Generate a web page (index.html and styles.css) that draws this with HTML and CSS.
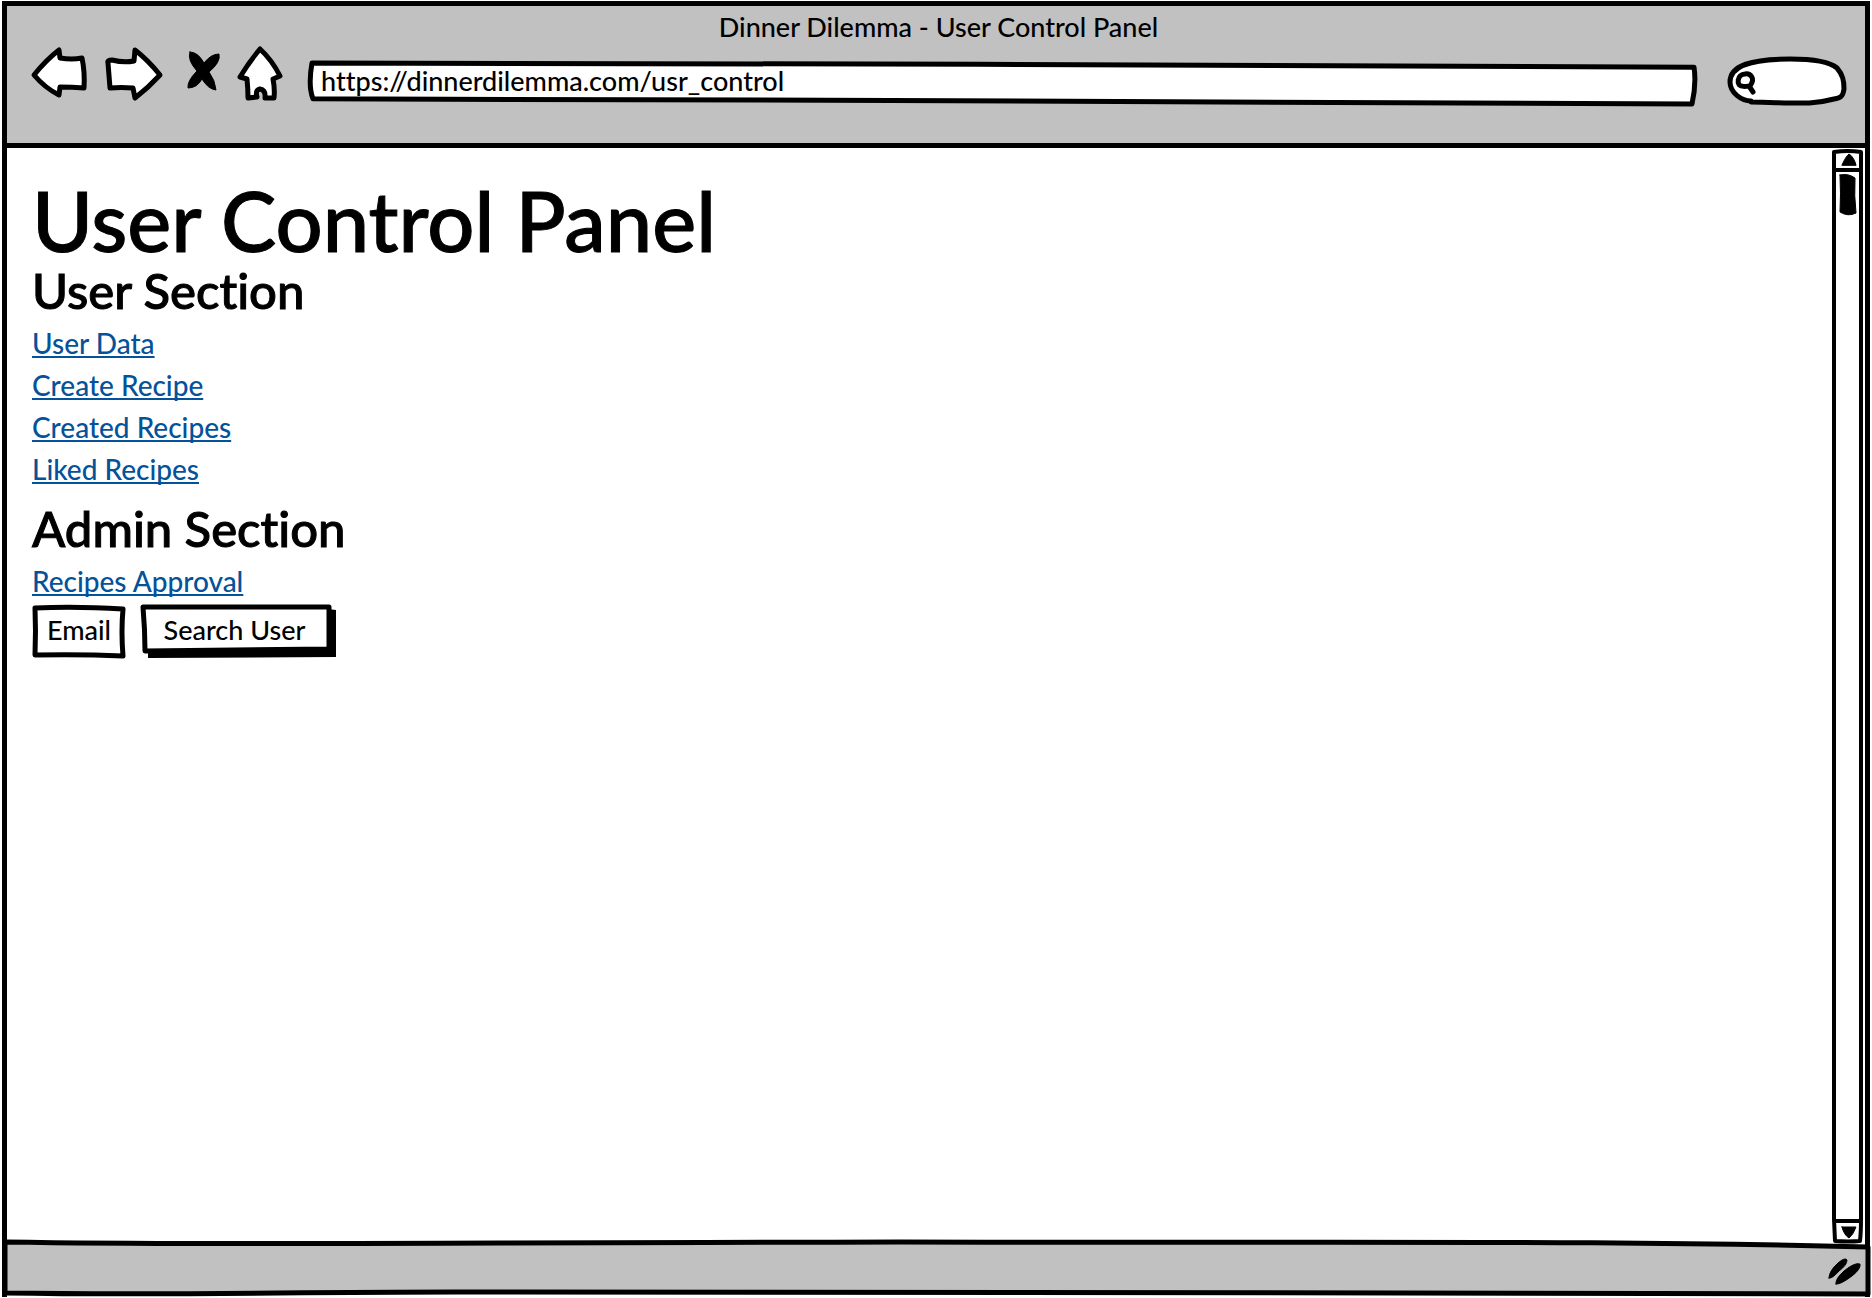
FILE: index.html
```html
<!DOCTYPE html>
<html lang="en">
<head>
<meta charset="utf-8">
<title>Dinner Dilemma - User Control Panel</title>
<link rel="stylesheet" href="styles.css">
</head>
<body>
<div class="window">
  <header class="chrome">
    <div class="window-title">Dinner Dilemma - User Control Panel</div>
    <div class="toolbar">
      <nav class="nav-buttons" aria-label="Browser">
        <button class="nav-button" type="button" aria-label="Back">
          <svg width="56" height="60" viewBox="31 46 56 60"><path d="M34 75Q46 60 59 50L60 58Q72 60 82 58Q85 72 84 88Q72 87 60 87L59 95Q45 88 34 75Z"/></svg>
        </button>
        <button class="nav-button" type="button" aria-label="Forward">
          <svg width="60" height="60" viewBox="104 46 60 60"><path d="M108 63Q107 60 112 60Q124 63 134 61L135 50Q148 60 160 75Q148 88 135 98L133 88Q121 87 110 88Q109 75 108 63Z"/></svg>
        </button>
        <button class="nav-button" type="button" aria-label="Stop">
          <svg class="solid" width="40" height="60" viewBox="181 46 40 60"><path d="M190 52Q198 52 204 63Q211 54 219 54Q221 62 209 72Q215 80 216 90Q208 89 202 79Q197 88 188 88Q187 81 197 71Q187 60 190 52Z"/></svg>
        </button>
        <button class="nav-button" type="button" aria-label="Home">
          <svg width="46" height="60" viewBox="238 46 46 60"><path d="M260 49Q272 60 280 76L273 79Q275 89 274 98L265 98Q266 90 260 89Q255 90 257 97L248 98Q248 89 247 79L240 77Q249 62 260 49Z"/></svg>
        </button>
      </nav>
      <div class="address">
        <svg class="sketch" viewBox="308 61 1389 44" preserveAspectRatio="none"><path d="M312 63C800 64 1200 64 1694 67C1696 80 1695 90 1692 103C1100 102 800 98 313 98C309 88 310 74 312 63Z"/></svg>
        <input class="address-input" type="text" aria-label="Address" value="https://dinnerdilemma.com/usr_control">
      </div>
      <div class="search">
        <svg class="sketch" viewBox="1727 57 119 50" preserveAspectRatio="none"><path d="M1751 102C1742 102 1730 94 1730 83C1730 66 1752 60 1790 60C1812 60 1830 63 1837 69C1843 76 1844 82 1844 90C1843 98 1840 99 1834 100C1812 106 1800 104 1751 103"/></svg>
        <svg class="glass" width="20" height="23" viewBox="1736 72 20 23"><path d="M1750 88C1756 80 1750 75 1745 76C1737 76 1736 88 1742 88C1745 89 1748 88 1749 88L1753 94"/></svg>
        <input class="search-input" type="text" aria-label="Search">
      </div>
    </div>
  </header>

  <div class="viewport">
    <main class="content">
      <h1>User Control Panel</h1>
      <h2>User Section</h2>
      <ul class="links">
        <li><a href="#data">User Data</a></li>
        <li><a href="#create">Create Recipe</a></li>
        <li><a href="#created">Created Recipes</a></li>
        <li><a href="#liked">Liked Recipes</a></li>
      </ul>
      <h2>Admin Section</h2>
      <ul class="links admin-links">
        <li><a href="#approval">Recipes Approval</a></li>
      </ul>
      <form class="user-search">
        <div class="email">
          <svg class="sketch" viewBox="32 604 94 53" preserveAspectRatio="none"><path d="M35 607Q75 605 123 608Q121 630 123 655Q80 653 35 654Q36 630 35 607Z"/></svg>
          <input class="email-input" type="text" aria-label="Email" value="Email">
        </div>
        <button class="search-button" type="submit">
          <svg class="sketch" viewBox="141 605 195 53" preserveAspectRatio="none"><path class="shadow" d="M328 609L336 610L336 657L148 658L148 652Z"/><path d="M144 607Q240 607 329 607L329 649Q250 650 145 651Q145 630 143 607Z"/></svg>
          <span class="button-label">Search User</span>
        </button>
      </form>
    </main>
    <div class="scrollbar">
      <button class="scroll-button" type="button" aria-label="Scroll up">
        <svg class="solid" width="31" height="23" viewBox="1832 149 31 23"><path d="M1842 165Q1846 156 1849 154Q1854 157 1856 165Z"/><path class="line" d="M1834 172L1834 152Q1848 150 1861 152L1861 172M1834 170L1861 170"/></svg>
      </button>
      <div class="track">
        <svg class="solid" width="16" height="42" viewBox="1840 174 16 42"><path d="M1840 175Q1848 173 1855 178Q1854 196 1856 213Q1848 217 1840 212Q1841 194 1840 175Z"/></svg>
      </div>
      <button class="scroll-button" type="button" aria-label="Scroll down">
        <svg class="solid" width="31" height="23" viewBox="1832 1220 31 23"><path d="M1842 1227L1856 1227Q1853 1235 1849 1238Q1844 1235 1842 1227Z"/><path class="line" d="M1834 1219L1835 1241Q1848 1242 1860 1241Q1861 1232 1861 1219M1834 1221L1861 1221"/></svg>
      </button>
    </div>
  </div>

  <footer class="status">
    <svg class="sketch" viewBox="7 1243 1858 54" preserveAspectRatio="none"><path d="M5 1242C200 1245 350 1243 900 1242C1400 1243 1600 1240 1868 1247L1868 1294C1400 1292 900 1294 500 1292C300 1291 200 1296 5 1293Z"/></svg>
    <svg class="grip solid" width="32" height="28" viewBox="1828 1257 32 28"><path d="M1829 1279Q1829 1272 1838 1264Q1845 1258 1847 1261Q1847 1266 1839 1272Q1832 1280 1829 1279ZM1836 1285Q1835 1280 1844 1272Q1855 1263 1860 1265Q1861 1270 1852 1277Q1840 1286 1836 1285Z"/></svg>
  </footer>
</div>
</body>
</html>
```
FILE: styles.css
```css
* {
  box-sizing: border-box;
}

body {
  margin: 0;
  background: #fff;
  color: #000;
  font-family: Lato, "Liberation Sans", sans-serif;
  font-size: 27px;
  font-weight: 500;
  font-variant-ligatures: none;
}

button,
input {
  margin: 0;
  padding: 0;
  border: 0;
  background: none;
  color: inherit;
  font: inherit;
  font-variant-ligatures: none;
}

svg {
  display: block;
  overflow: visible;
  fill: #fff;
  stroke: #000;
  stroke-width: 5px;
  stroke-linejoin: round;
  stroke-linecap: round;
}

.solid {
  fill: #000;
  stroke-width: 1px;
}

.line {
  fill: none;
  stroke-width: 4px;
}

/* Hand-drawn outline that stretches with its box */
.sketch {
  position: absolute;
  inset: 0;
  width: 100%;
  height: 100%;
}

.sketch path {
  vector-effect: non-scaling-stroke;
}

.window {
  display: flex;
  flex-direction: column;
  min-height: calc(100vh - 2px);
  margin: 1px 2px;
  border: 5px solid #000;
  border-bottom: 0;
}

.chrome {
  padding: 0 19px 37px 24px;
  border-bottom: 5px solid #000;
  background: #c1c1c1;
}

.window-title {
  padding-top: 2px;
  line-height: 38px;
  text-align: center;
}

.toolbar {
  display: flex;
  align-items: flex-end;
  gap: 24px;
}

.nav-buttons {
  display: flex;
  gap: 17px;
}

.address {
  position: relative;
  flex: 1;
  height: 45px;
  margin-right: 6px;
}

.address-input {
  position: relative;
  width: 100%;
  height: 38px;
  padding: 0 13px;
}

.search {
  position: relative;
  display: flex;
  align-items: center;
  width: 119px;
  height: 50px;
  padding: 0 9px;
}

.glass {
  position: relative;
  fill: none;
}

.search-input {
  position: relative;
  flex: 1;
  min-width: 0;
}

.viewport {
  display: flex;
  flex: 1;
}

.content {
  flex: 1;
  padding: 28px 25px;
}

h1,
h2 {
  margin: 0;
  font-weight: 500;
  -webkit-text-stroke: 1px #000;
}

h1 {
  font-size: 83px;
  line-height: 88px;
}

h2 {
  margin-bottom: 6px;
  font-size: 49px;
  line-height: 52px;
}

.links {
  margin: 0 0 12px;
  padding: 0;
  list-style: none;
  font-size: 28px;
  line-height: 42px;
}

.admin-links {
  margin-bottom: 3px;
}

a {
  color: #045299;
  text-decoration-thickness: 2px;
  text-underline-offset: 2px;
  text-decoration-skip-ink: none;
}

.user-search {
  display: flex;
  gap: 15px;
}

.email {
  position: relative;
  width: 94px;
}

.email-input {
  position: relative;
  width: 100%;
  height: 48px;
  text-align: center;
}

.search-button {
  position: relative;
  width: 195px;
  height: 53px;
  padding: 0 8px 5px 0;
}

.button-label {
  position: relative;
}

.shadow {
  fill: #000;
  stroke-width: 0;
}

.scrollbar {
  display: flex;
  flex-direction: column;
  width: 31px;
  margin: 1px 2px 0 0;
}

.scroll-button {
  height: 23px;
}

.track {
  flex: 1;
  padding: 2px 4px;
  border: solid #000;
  border-width: 0 4px;
}

.status {
  position: relative;
  display: flex;
  align-items: center;
  justify-content: flex-end;
  height: 54px;
  padding-right: 5px;
}

.status .sketch {
  fill: #c1c1c1;
}

.grip {
  position: relative;
}
```
